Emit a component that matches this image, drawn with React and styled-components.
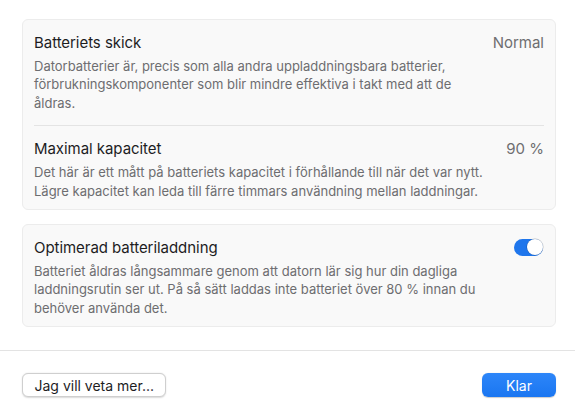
import React from "react";
import styled, { createGlobalStyle } from "styled-components";

const GlobalStyle = createGlobalStyle`
  html, body {
    margin: 0;
    padding: 0;
    background: #ffffff;
  }
  body {
    font-family: Inter, "Liberation Sans", sans-serif;
    -webkit-font-smoothing: antialiased;
  }
`;

const App = () => {
  return (
    <>
      <GlobalStyle />
      <Sheet>
        <Content>
          <Card>
            <Section>
              <Row>
                <Title>Batteriets skick</Title>
                <Value>Normal</Value>
              </Row>
              <Description>
                Datorbatterier är, precis som alla andra uppladdningsbara batterier,
                <br />
                förbrukningskomponenter som blir mindre effektiva i takt med att de
                <br />
                åldras.
              </Description>
            </Section>
            <Section $divider>
              <Row>
                <Title>Maximal kapacitet</Title>
                <Value>90 %</Value>
              </Row>
              <Description>
                Det här är ett mått på batteriets kapacitet i förhållande till när det var nytt.
                <br />
                Lägre kapacitet kan leda till färre timmars användning mellan laddningar.
              </Description>
            </Section>
          </Card>
          <Card>
            <Section>
              <Row>
                <Title>Optimerad batteriladdning</Title>
                <Toggle aria-checked="true" role="switch">
                  <Knob />
                </Toggle>
              </Row>
              <Description>
                Batteriet åldras långsammare genom att datorn lär sig hur din dagliga
                <br />
                laddningsrutin ser ut. På så sätt laddas inte batteriet över 80 % innan du
                <br />
                behöver använda det.
              </Description>
            </Section>
          </Card>
        </Content>
        <Footer>
          <Button>Jag vill veta mer...</Button>
          <Button $primary>Klar</Button>
        </Footer>
      </Sheet>
    </>
  );
};

export default App;

const Sheet = styled.div`
  width: 575px;
  height: 419px;
  display: flex;
  flex-direction: column;
  background: #ffffff;
  overflow: hidden;
`;

const Content = styled.div`
  flex: 1;
  display: flex;
  flex-direction: column;
  gap: 14px;
  padding: 19px 19px 0 22px;
`;

const Card = styled.div`
  background: #f9f9f9;
  border: 1px solid #ececec;
  border-radius: 6px;
  padding: 0 11px;
`;

const Section = styled.div`
  padding: 11px 0 13px;
  border-top: ${(p) => (p.$divider ? "1px solid #e4e4e4" : "none")};

  &:last-child {
    padding-bottom: 9px;
  }
`;

const Row = styled.div`
  display: flex;
  align-items: center;
  justify-content: space-between;
  height: 22px;
`;

const Title = styled.div`
  font-size: 15px;
  color: #1d1d1f;
  letter-spacing: -0.05px;
`;

const Value = styled.div`
  font-size: 15px;
  color: #6e6e70;
`;

const Description = styled.p`
  margin: 4px 0 0;
  font-size: 13px;
  line-height: 18.4px;
  color: #6d6d70;
  white-space: nowrap;
`;

const Toggle = styled.div`
  width: 29px;
  height: 17px;
  border-radius: 9px;
  background: #1f76ec;
  position: relative;
  margin-right: 1px;
`;

const Knob = styled.span`
  position: absolute;
  top: 0.5px;
  right: 0.5px;
  width: 16px;
  height: 16px;
  border-radius: 50%;
  background: #ffffff;
  box-shadow: 0 0 0 0.5px rgba(0, 0, 0, 0.25);
`;

const Footer = styled.div`
  height: 68px;
  border-top: 1px solid #e3e3e3;
  display: flex;
  align-items: center;
  justify-content: space-between;
  padding: 0 19px 0 22px;
  margin-top: auto;
`;

const Button = styled.button`
  font-family: inherit;
  font-size: 14px;
  height: 24px;
  padding: 0 ${(p) => (p.$primary ? "23px" : "11.5px")};
  min-width: ${(p) => (p.$primary ? "74px" : "auto")};
  border-radius: 6px;
  border: ${(p) => (p.$primary ? "none" : "0.5px solid #cfcfcf")};
  background: ${(p) => (p.$primary ? "linear-gradient(#2d86f9, #1a76f1)" : "#ffffff")};
  color: ${(p) => (p.$primary ? "#ffffff" : "#1d1d1f")};
  box-shadow: ${(p) =>
    p.$primary ? "0 0.5px 1px rgba(0, 0, 0, 0.2)" : "0 0.5px 1.5px rgba(0, 0, 0, 0.15)"};
  cursor: pointer;
`;
